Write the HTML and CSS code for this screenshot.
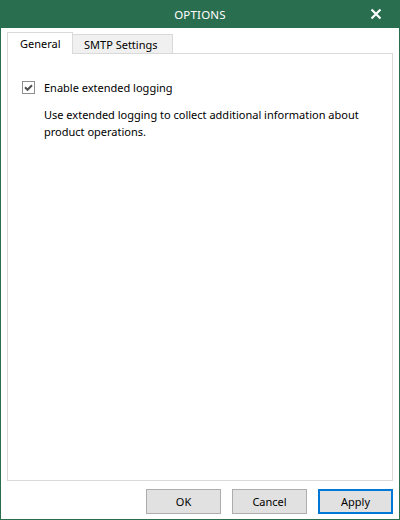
FILE: index.html
```html
<!DOCTYPE html>
<html>
<head>
<meta charset="utf-8">
<link rel="stylesheet" href="styles.css">
</head>
<body>
<div class="window">
  <header class="titlebar">
    <span class="title">OPTIONS</span>
    <span class="close">
      <svg width="12" height="12" viewBox="0 0 12 12"><path d="M1.5 1.5 L10.5 10.5 M10.5 1.5 L1.5 10.5" stroke="#fff" stroke-width="2.2" fill="none"/></svg>
    </span>
  </header>
  <main class="content">
    <div class="tabs">
      <div class="tab active">General</div>
      <div class="tab">SMTP Settings</div>
    </div>
    <section class="panel">
      <label class="check">
        <span class="box">
          <svg width="11" height="11" viewBox="0 0 11 11"><path d="M2 5.3 L4.5 7.8 L9 3.3" stroke="#505050" stroke-width="2" fill="none"/></svg>
        </span>
        <span>Enable extended logging</span>
      </label>
      <p class="desc">Use extended logging to collect additional information about product operations.</p>
    </section>
    <footer class="buttons">
      <button class="btn">OK</button>
      <button class="btn">Cancel</button>
      <button class="btn primary">Apply</button>
    </footer>
  </main>
</div>
</body>
</html>
```

FILE: styles.css
```css
html, body {
  margin: 0;
  padding: 0;
  background: #fff;
}
body {
  font-family: "Noto Sans", "Open Sans", sans-serif;
  font-size: 11px;
  color: #000;
}
.window {
  width: 400px;
  height: 520px;
  box-sizing: border-box;
  border: 1px solid #2a6e50;
  border-top: 0;
  display: flex;
  flex-direction: column;
  background: #fff;
}
.titlebar {
  height: 28px;
  background: #2a6e50;
  margin: 0 -1px;
  position: relative;
  display: flex;
  align-items: center;
  justify-content: center;
}
.title {
  color: #fff;
  font-size: 11.5px;
  letter-spacing: 0.2px;
}
.close {
  position: absolute;
  right: 18px;
  top: 8px;
  width: 12px;
  height: 12px;
  display: flex;
}
.content {
  flex: 1;
  display: flex;
  flex-direction: column;
  padding: 4px 6px 5px 6px;
}
.tabs {
  display: flex;
  align-items: flex-end;
  height: 22px;
  margin-bottom: -1px;
  position: relative;
  z-index: 1;
}
.tab {
  box-sizing: border-box;
  border: 1px solid #d9d9d9;
  border-bottom: 0;
  background: #f0f0f0;
  height: 20px;
  display: flex;
  align-items: center;
  white-space: nowrap;
  line-height: 1;
}
.tab.active {
  background: #fff;
  height: 22px;
  width: 66px;
  padding: 0 0 1px 12px;
}
.tab + .tab {
  border-left: 0;
  border-bottom: 1px solid #d9d9d9;
  width: 100px;
  padding-left: 11px;
}
.panel {
  flex: 1;
  border: 1px solid #d9d9d9;
  padding: 26px 14px 0 14px;
}
.check {
  display: flex;
  align-items: center;
  gap: 9px;
  height: 15px;
}
.box {
  box-sizing: border-box;
  width: 13px;
  height: 13px;
  border: 1px solid #8f8f8f;
  display: flex;
  align-items: center;
  justify-content: center;
  background: #fff;
}
.desc {
  margin: 11px 0 0 22px;
  line-height: 17px;
  width: 340px;
}
.buttons {
  display: flex;
  justify-content: flex-end;
  gap: 11px;
  padding-top: 8px;
}
.btn {
  font-family: inherit;
  font-size: 11px;
  width: 75px;
  height: 25px;
  box-sizing: border-box;
  background: #e1e1e1;
  border: 1px solid #adadad;
  border-radius: 0;
  padding: 0;
  color: #000;
}
.btn.primary {
  border: 2px solid #0078d7;
}
```
